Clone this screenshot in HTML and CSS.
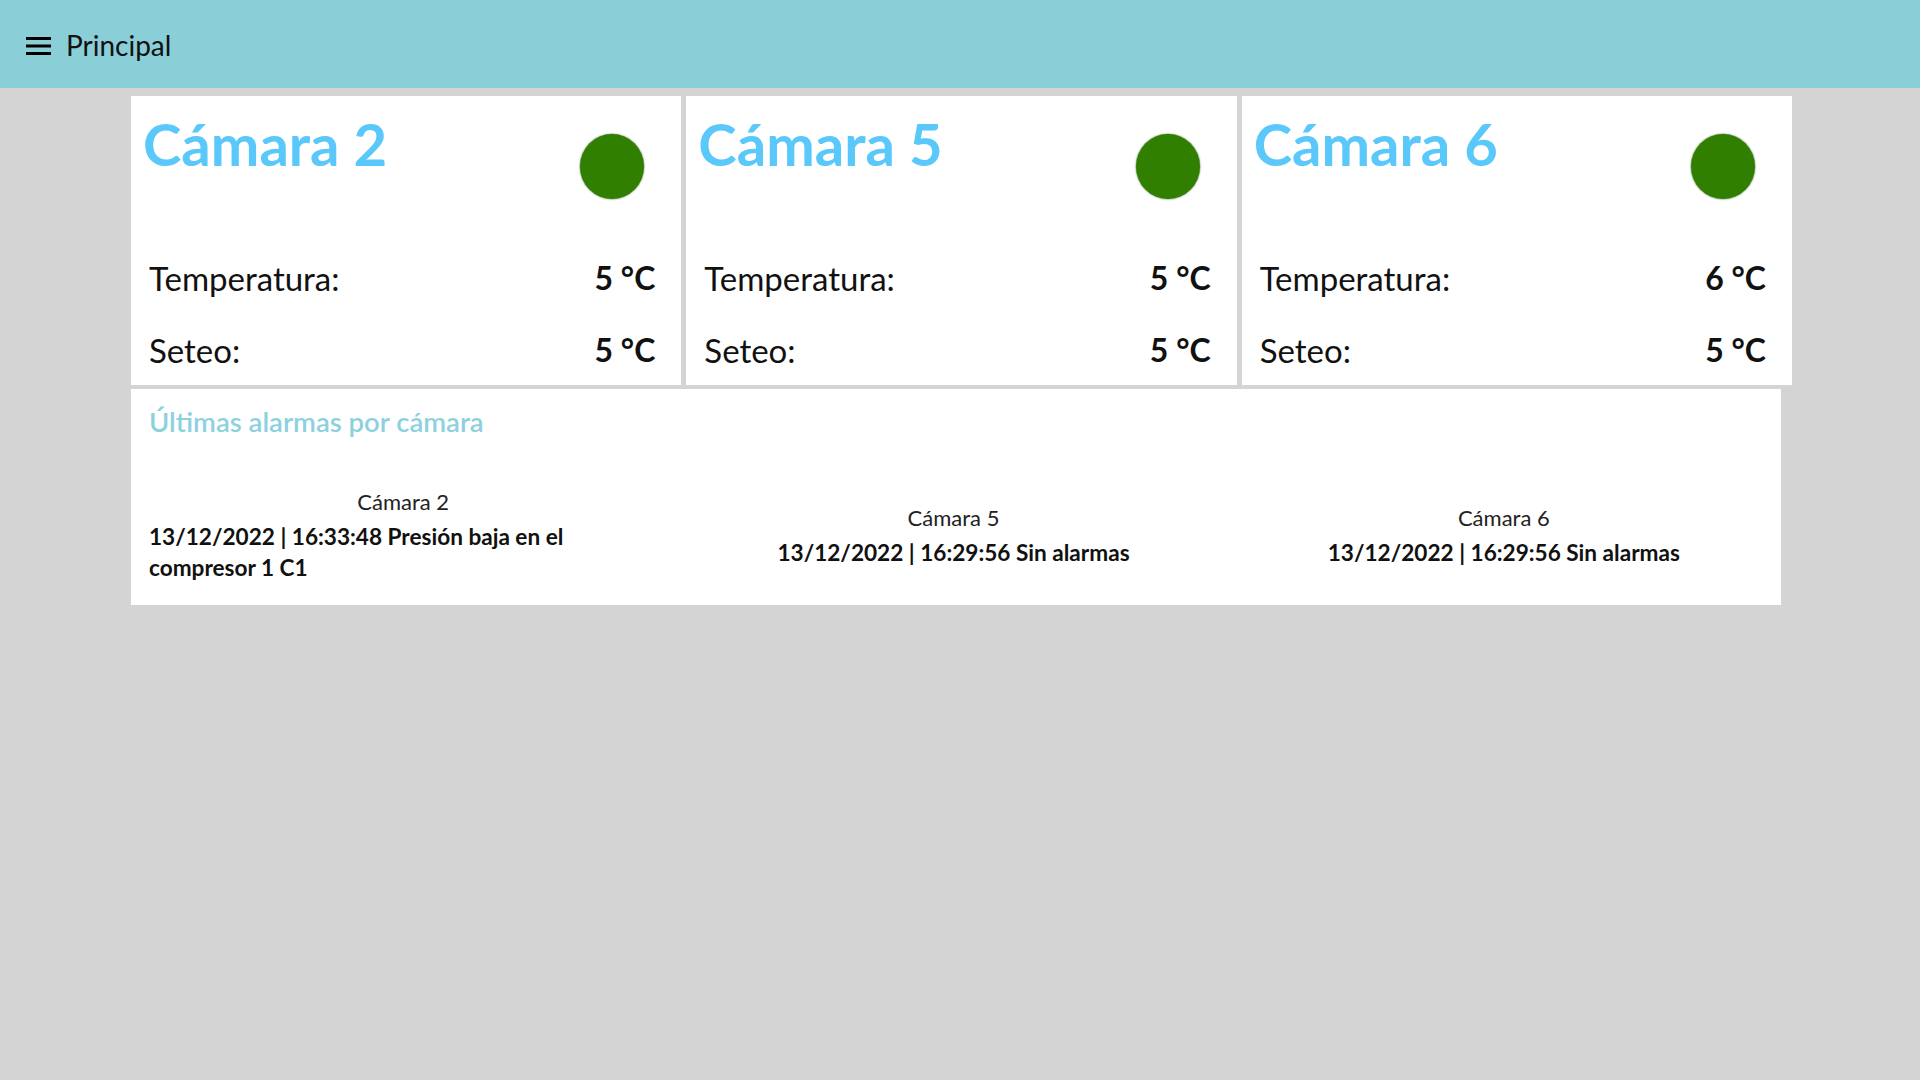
FILE: index.html
```html
<!DOCTYPE html>
<html lang="es">
<head>
<meta charset="utf-8">
<title>Principal</title>
<link rel="stylesheet" href="styles.css">
</head>
<body>
<header class="topbar">
  <svg class="menu-icon" width="25" height="18" viewBox="0 0 25 18" aria-hidden="true">
    <rect x="0" y="0" width="25" height="3" fill="#000"/>
    <rect x="0" y="7.5" width="25" height="3" fill="#000"/>
    <rect x="0" y="15" width="25" height="3" fill="#000"/>
  </svg>
  <span class="topbar-title">Principal</span>
</header>

<main class="content">
  <section class="cards">
    <article class="card">
      <div class="card-head">
        <h2 class="card-title">Cámara 2</h2>
        <span class="status-dot"></span>
      </div>
      <div class="card-row"><span class="label">Temperatura:</span><span class="value">5 °C</span></div>
      <div class="card-row"><span class="label">Seteo:</span><span class="value">5 °C</span></div>
    </article>
    <article class="card">
      <div class="card-head">
        <h2 class="card-title">Cámara 5</h2>
        <span class="status-dot"></span>
      </div>
      <div class="card-row"><span class="label">Temperatura:</span><span class="value">5 °C</span></div>
      <div class="card-row"><span class="label">Seteo:</span><span class="value">5 °C</span></div>
    </article>
    <article class="card">
      <div class="card-head">
        <h2 class="card-title">Cámara 6</h2>
        <span class="status-dot"></span>
      </div>
      <div class="card-row"><span class="label">Temperatura:</span><span class="value">6 °C</span></div>
      <div class="card-row"><span class="label">Seteo:</span><span class="value">5 °C</span></div>
    </article>
  </section>

  <section class="alarms">
    <h3 class="alarms-title">Últimas alarmas por cámara</h3>
    <div class="alarm-grid">
      <div class="alarm-col">
        <div class="alarm-cam">Cámara 2</div>
        <div class="alarm-text">13/12/2022 | 16:33:48 Presión baja en el compresor 1 C1</div>
      </div>
      <div class="alarm-col">
        <div class="alarm-cam">Cámara 5</div>
        <div class="alarm-text">13/12/2022 | 16:29:56 Sin alarmas</div>
      </div>
      <div class="alarm-col">
        <div class="alarm-cam">Cámara 6</div>
        <div class="alarm-text">13/12/2022 | 16:29:56 Sin alarmas</div>
      </div>
    </div>
  </section>
</main>
</body>
</html>
```

FILE: styles.css
```css
* { box-sizing: border-box; }

html, body {
  margin: 0;
  padding: 0;
}

body {
  background: #d4d4d4;
  font-family: Lato, "Open Sans", "Liberation Sans", sans-serif;
  color: #111;
  min-height: 1080px;
}

.topbar {
  height: 88px;
  background: #8aced8;
  display: flex;
  align-items: center;
  padding: 4px 0 0 26px;
}

.menu-icon {
  display: block;
  flex: none;
  margin-right: 15px;
}

.topbar-title {
  font-size: 28px;
  line-height: 1.2;
  color: #111;
}

.content {
  width: 1661px;
  margin: 8px 0 0 131px;
}

.cards {
  display: grid;
  grid-template-columns: repeat(3, 1fr);
  gap: 5px;
}

.card {
  background: #fff;
  height: 289px;
  padding: 14px 26px 0 18px;
}

.card-head {
  height: 130px;
  display: flex;
  justify-content: space-between;
  align-items: flex-start;
}

.card-title {
  margin: -1px 0 0 -6px;
  font-size: 58px;
  line-height: 1.2;
  font-weight: 700;
  color: #5ac8fa;
}

.status-dot {
  width: 64px;
  height: 65px;
  margin: 24px 11px 0 0;
  border-radius: 50%;
  background: #317f00;
  box-shadow: 0 0 1.5px 0.5px rgba(40, 90, 10, 0.55);
}

.card-row {
  height: 72px;
  padding-top: 4px;
  display: flex;
  justify-content: space-between;
  align-items: center;
}

.label {
  font-size: 33px;
  line-height: 60px;
  font-weight: 400;
}

.value {
  font-size: 32px;
  line-height: 60px;
  font-weight: 700;
}

.alarms {
  margin-top: 4px;
  width: 1650px;
  background: #fff;
  padding: 16px 0 22px;
}

.alarms-title {
  margin: 0 0 0 18px;
  font-size: 27.5px;
  line-height: 1.2;
  font-weight: 600;
  color: #8dd1de;
}

.alarm-grid {
  margin: 48px 2px 0 -3px;
  display: grid;
  grid-template-columns: repeat(3, 1fr);
  align-items: center;
}

.alarm-col {
  padding: 0 21px;
  text-align: center;
}

.alarm-cam {
  font-size: 22px;
  line-height: 32px;
  margin-bottom: 3px;
  font-weight: 400;
  color: #222;
}

.alarm-text {
  display: inline-block;
  text-align: left;
  font-size: 22.6px;
  line-height: 31px;
  font-weight: 700;
  color: #111;
}
```
